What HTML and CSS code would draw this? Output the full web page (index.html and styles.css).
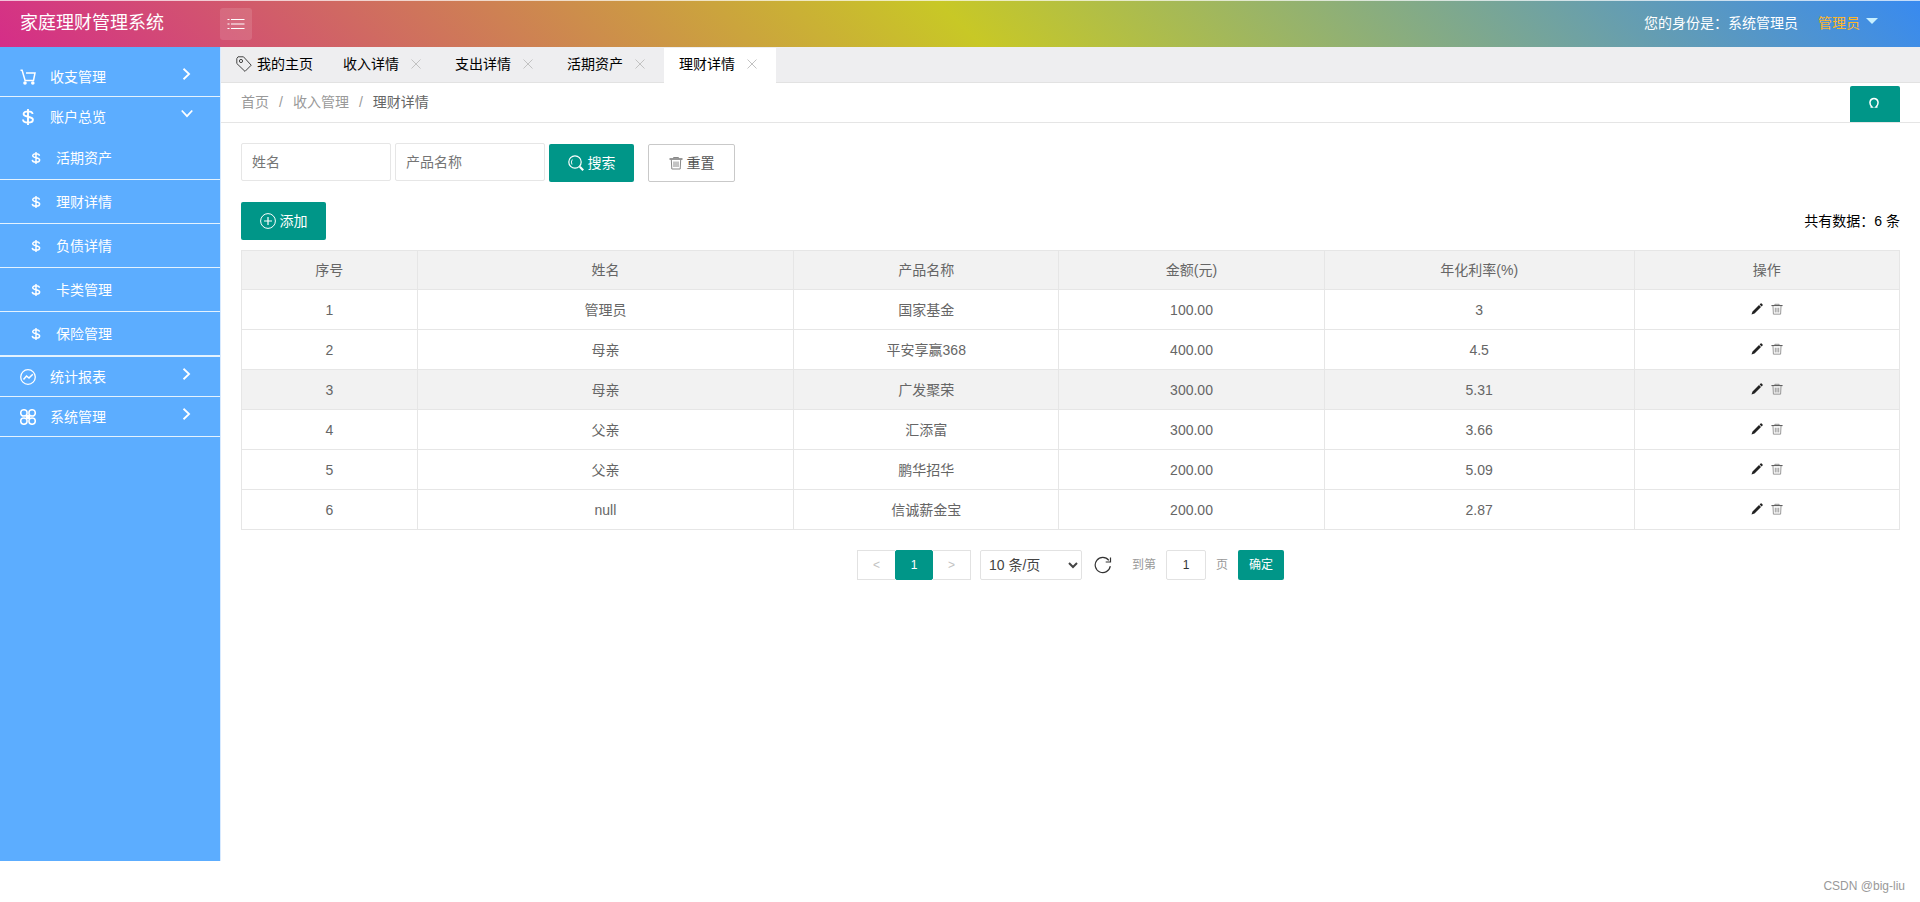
FILE: index.html
```html
<!DOCTYPE html>
<html lang="zh-CN">
<head>
<meta charset="utf-8">
<title>家庭理财管理系统</title>
<link rel="stylesheet" href="styles.css">
</head>
<body>
<svg class="sprite" aria-hidden="true">
  <symbol id="chevron" viewBox="0 0 12 12"><path d="M3 1.500l4.800 4.500L3 10.500" fill="none" stroke="currentColor" stroke-width="1.500"/></symbol>
  <symbol id="close" viewBox="0 0 10 10"><path d="M0.500 0.500l9 9M9.500 0.500l-9 9" stroke="currentColor" stroke-width="1" fill="none"/></symbol>
  <symbol id="dollar" viewBox="0 0 16 16"><path d="M12.600 5C12.400 3.100 10.700 2.400 8 2.400S3.600 3.300 3.600 5.100C3.600 8.600 12.900 6.900 12.900 10.700 12.900 12.700 11 13.600 8 13.600S3.100 12.700 3 10.500M8 0v16" fill="none" stroke="currentColor" stroke-width="1.900"/></symbol>
  <symbol id="trash" viewBox="0 0 14 14"><path d="M0.500 3h13" fill="none" stroke="#555" stroke-width="1.200"/><path d="M4.500 2.500V1.500h5v1M2.300 3.500l.5 9.500h8.400l.5-9.500" fill="none" stroke="currentColor"/><path d="M5 5.500v5.500M7 5.500v5.500M9 5.500v5.500" fill="none" stroke="currentColor"/></symbol>
  <symbol id="pencil" viewBox="0 0 12 12"><path d="M0.500 11.500l1-3L8 2l2 2-6.500 6.500zM8.600 1.400l1-1q.5-.4 1 0l1 1q.4.5 0 1l-1 1z" fill="currentColor"/></symbol>
</svg>

<header class="header">
  <h1 class="brand">家庭理财管理系统</h1>
  <button class="toggle" type="button" aria-label="菜单">
    <svg width="18" height="12" viewBox="0 0 18 12"><path d="M4 1.500h13.500M4 6h13.500M4 10.500h13.500M.5 1.500h2M.5 6h2M.5 10.500h2" stroke="currentColor" stroke-width="1.200"/></svg>
  </button>
  <div class="account">
    <span>您的身份是：系统管理员</span>
    <a class="user" href="#">管理员<i class="caret"></i></a>
  </div>
</header>

<div class="shell">
  <nav class="sidebar">
    <ul class="menu">
      <li><a class="menu-link" href="#">
        <svg class="menu-icon" viewBox="0 0 16 16"><path d="M.5 1.300h1.600l3 10.200h8.400L15 4H6" fill="none" stroke="currentColor" stroke-width="1.500"/><circle cx="5" cy="14" r="1.800" fill="currentColor"/><circle cx="12.800" cy="14" r="1.800" fill="currentColor"/></svg>
        <span>收支管理</span><svg class="arrow"><use href="#chevron"/></svg></a></li>
      <li><a class="menu-link" href="#">
        <svg class="menu-icon"><use href="#dollar"/></svg>
        <span>账户总览</span><svg class="arrow open"><use href="#chevron"/></svg></a>
        <ul class="submenu">
          <li><a href="#"><svg><use href="#dollar"/></svg>活期资产</a></li>
          <li><a href="#"><svg><use href="#dollar"/></svg>理财详情</a></li>
          <li><a href="#"><svg><use href="#dollar"/></svg>负债详情</a></li>
          <li><a href="#"><svg><use href="#dollar"/></svg>卡类管理</a></li>
          <li><a href="#"><svg><use href="#dollar"/></svg>保险管理</a></li>
        </ul>
      </li>
      <li><a class="menu-link" href="#">
        <svg class="menu-icon" viewBox="0 0 16 16"><circle cx="8" cy="8" r="7.300" fill="none" stroke="currentColor" stroke-width="1.300"/><path d="M3.500 10.500l3-3.500 2.500 2 3.800-3.800" fill="none" stroke="currentColor" stroke-width="1.500"/></svg>
        <span>统计报表</span><svg class="arrow"><use href="#chevron"/></svg></a></li>
      <li><a class="menu-link" href="#">
        <svg class="menu-icon" viewBox="0 0 16 16"><g fill="none" stroke="currentColor" stroke-width="1.500"><circle cx="3.900" cy="3.900" r="3.200"/><circle cx="12.100" cy="3.900" r="3.200"/><circle cx="3.900" cy="12.100" r="3.200"/><circle cx="12.100" cy="12.100" r="3.200"/></g><rect x="6" y="6" width="4" height="4" fill="currentColor"/></svg>
        <span>系统管理</span><svg class="arrow"><use href="#chevron"/></svg></a></li>
    </ul>
  </nav>

  <main class="main">
    <div class="tabs">
      <a class="tab home" href="#"><svg width="16" height="16" viewBox="0 0 16 16"><path d="M.8 2.500L2 .8 7.500.8 15.200 9.200 9 15.400.8 7.500z" fill="none" stroke="#444"/><circle cx="5" cy="5" r="1.600" fill="none" stroke="#444"/></svg>我的主页</a>
      <a class="tab" href="#">收入详情<svg class="close"><use href="#close"/></svg></a>
      <a class="tab" href="#">支出详情<svg class="close"><use href="#close"/></svg></a>
      <a class="tab" href="#">活期资产<svg class="close"><use href="#close"/></svg></a>
      <a class="tab active" href="#">理财详情<svg class="close"><use href="#close"/></svg></a>
    </div>

    <div class="crumb-bar">
      <div class="crumbs"><a href="#">首页</a><span>/</span><a href="#">收入管理</a><span>/</span><a class="current" href="#">理财详情</a></div>
      <button class="reload" type="button" aria-label="刷新"><svg width="10" height="12" viewBox="0 0 10 12"><path d="M1.500 10H3C-.3 7 .5 1.500 5 1.500S10.300 7 7 10h1.500" fill="none" stroke="currentColor" stroke-width="1.500"/></svg></button>
    </div>

    <div class="content">
      <form class="search">
        <input type="text" placeholder="姓名" aria-label="姓名">
        <input type="text" placeholder="产品名称" aria-label="产品名称">
        <button class="btn" type="button"><svg width="16" height="16" viewBox="0 0 16 16"><circle cx="7" cy="7" r="6.200" fill="none" stroke="currentColor" stroke-width="1.200"/><path d="M4 9.500Q2.500 7 4.300 4.500" fill="none" stroke="currentColor" stroke-width=".9"/><path d="M11.800 11.800l3.400 3.400" stroke="currentColor" stroke-width="2.200"/></svg>搜索</button>
        <button class="btn plain" type="reset"><svg width="14" height="14"><use href="#trash"/></svg>重置</button>
      </form>

      <div class="toolbar">
        <button class="btn" type="button"><svg width="16" height="16" viewBox="0 0 16 16"><circle cx="8" cy="8" r="7.400" fill="none" stroke="currentColor"/><path d="M8 4v8M4 8h8" stroke="currentColor" stroke-width="1.200"/></svg>添加</button>
        <span>共有数据：6 条</span>
      </div>

      <table class="grid">
        <colgroup><col class="c-no"><col class="c-name"><col class="c-mid"><col class="c-mid"><col class="c-rate"><col class="c-mid"></colgroup>
        <thead><tr><th>序号</th><th>姓名</th><th>产品名称</th><th>金额(元)</th><th>年化利率(%)</th><th>操作</th></tr></thead>
        <tbody>
          <tr><td>1</td><td>管理员</td><td>国家基金</td><td>100.00</td><td>3</td><td><a class="act edit" href="#" aria-label="编辑"><svg><use href="#pencil"/></svg></a><a class="act" href="#" aria-label="删除"><svg><use href="#trash"/></svg></a></td></tr>
          <tr><td>2</td><td>母亲</td><td>平安享赢368</td><td>400.00</td><td>4.5</td><td><a class="act edit" href="#" aria-label="编辑"><svg><use href="#pencil"/></svg></a><a class="act" href="#" aria-label="删除"><svg><use href="#trash"/></svg></a></td></tr>
          <tr class="hover"><td>3</td><td>母亲</td><td>广发聚荣</td><td>300.00</td><td>5.31</td><td><a class="act edit" href="#" aria-label="编辑"><svg><use href="#pencil"/></svg></a><a class="act" href="#" aria-label="删除"><svg><use href="#trash"/></svg></a></td></tr>
          <tr><td>4</td><td>父亲</td><td>汇添富</td><td>300.00</td><td>3.66</td><td><a class="act edit" href="#" aria-label="编辑"><svg><use href="#pencil"/></svg></a><a class="act" href="#" aria-label="删除"><svg><use href="#trash"/></svg></a></td></tr>
          <tr><td>5</td><td>父亲</td><td>鹏华招华</td><td>200.00</td><td>5.09</td><td><a class="act edit" href="#" aria-label="编辑"><svg><use href="#pencil"/></svg></a><a class="act" href="#" aria-label="删除"><svg><use href="#trash"/></svg></a></td></tr>
          <tr><td>6</td><td>null</td><td>信诚薪金宝</td><td>200.00</td><td>2.87</td><td><a class="act edit" href="#" aria-label="编辑"><svg><use href="#pencil"/></svg></a><a class="act" href="#" aria-label="删除"><svg><use href="#trash"/></svg></a></td></tr>
        </tbody>
      </table>

      <div class="pager">
        <div class="pages"><button type="button" disabled>&lt;</button><button class="on" type="button">1</button><button type="button" disabled>&gt;</button></div>
        <select aria-label="每页条数"><option>10 条/页</option><option>20 条/页</option></select>
        <button class="refresh" type="button" aria-label="刷新列表"><svg width="18" height="18" viewBox="0 0 18 18"><path d="M16.300 10.200A7.600 7.600 0 1 1 14.800 4.300" fill="none" stroke="currentColor" stroke-width="1.200"/><path d="M16.500 1.500V6h-4.800" fill="none" stroke="currentColor" stroke-width="1.200"/></svg></button>
        <label class="skip">到第<input type="text" value="1">页</label>
        <button class="go" type="button">确定</button>
      </div>
    </div>
  </main>
</div>

<footer class="footer">CSDN @big-liu</footer>
</body>
</html>
```
FILE: styles.css
```css
* {
  box-sizing: border-box;
}

body {
  margin: 0;
  min-height: 100vh;
  display: flex;
  flex-direction: column;
  background: #fff;
  color: #000;
  font: 14px/20px "Liberation Sans", "Noto Sans CJK SC", sans-serif;
}

a {
  color: inherit;
  text-decoration: none;
}

ul {
  margin: 0;
  padding: 0;
  list-style: none;
}

button,
input,
select {
  font: inherit;
  color: inherit;
}

button {
  padding: 0;
  border: 0;
  background: none;
  cursor: pointer;
}

svg {
  flex: none;
}

.sprite {
  display: none;
}

/* Header */
.header {
  display: flex;
  align-items: center;
  height: 47px;
  padding-right: 42px;
  border-top: 1px solid rgba(255, 255, 255, .7);
  background: linear-gradient(45deg, #d52d88, #c8c826 50%, #388af0) border-box;
  color: #fff;
}

.brand {
  width: 220px;
  margin: 0;
  padding: 0 20px 2px;
  font-size: 18px;
  font-weight: 400;
  line-height: 24px;
}

.toggle {
  display: flex;
  align-items: center;
  justify-content: center;
  width: 32px;
  height: 32px;
  border-radius: 3px;
  background: rgba(255, 255, 255, .12);
}

.account {
  display: flex;
  gap: 20px;
  margin-left: auto;
  padding-bottom: 2px;
}

.user {
  display: flex;
  align-items: center;
  gap: 6px;
  color: #ffb629;
}

.caret {
  margin-bottom: 4px;
  border: 6px solid transparent;
  border-top-color: #c8f0ff;
  border-bottom: 0;
}

/* Sidebar */
.shell {
  display: flex;
  flex: 1;
}

.sidebar {
  width: 221px;
  flex: none;
  padding-top: 10px;
  border-right: 1px solid #d8eaff;
  background: #5cadff;
  color: #fff;
}

.menu li {
  border-bottom: 1px solid #e4f3ff;
}

.menu-link {
  display: flex;
  align-items: center;
  height: 39px;
  padding: 0 26px 0 20px;
}

.menu-icon {
  width: 16px;
  height: 16px;
  margin-right: 14px;
}

.arrow {
  width: 14px;
  height: 14px;
  margin: 0 0 6px auto;
}

.arrow.open {
  transform: rotate(90deg);
}

.submenu a {
  display: flex;
  align-items: center;
  gap: 14px;
  height: 43px;
  padding-left: 30px;
}

.submenu svg {
  width: 12px;
  height: 12px;
}

/* Tabs and breadcrumb */
.main {
  flex: 1;
  min-width: 0;
}

.tabs {
  display: flex;
  align-items: flex-end;
  height: 36px;
  border-bottom: 1px solid #e2e2e2;
  background: #eeeef0;
}

.tab {
  display: flex;
  align-items: center;
  height: 34px;
  padding: 0 19px 2px 15px;
}

.tab.home {
  gap: 5px;
  padding-right: 15px;
}

.tab.active {
  height: 35px;
  margin-bottom: -1px;
  padding-bottom: 3px;
  background: #fff;
}

.close {
  width: 10px;
  height: 10px;
  margin-left: 12px;
  color: #c2c2c2;
}

.crumb-bar {
  display: flex;
  align-items: flex-end;
  justify-content: space-between;
  height: 40px;
  padding: 0 20px;
  border-bottom: 1px solid #e5e5e5;
}

.crumbs {
  align-self: center;
  padding-bottom: 2px;
  color: #999;
}

.crumbs span {
  margin: 0 10px;
}

.crumbs .current {
  color: #666;
}

.reload {
  display: flex;
  align-items: center;
  justify-content: center;
  width: 50px;
  height: 36px;
  padding: 0 3px 2px 0;
  border-radius: 2px 2px 0 0;
  background: #009688;
  color: #fff;
}

/* Content */
.content {
  padding: 20px;
}

.search {
  display: flex;
  align-items: flex-end;
  gap: 4px;
  height: 39px;
}

.search input {
  align-self: flex-start;
  width: 150px;
  height: 38px;
  padding: 0 10px;
  border: 1px solid #e6e6e6;
  border-radius: 2px;
}

.search input::placeholder {
  color: #757575;
}

.btn {
  display: flex;
  align-items: center;
  justify-content: center;
  gap: 4px;
  width: 85px;
  height: 38px;
  border-radius: 2px;
  background: #009688;
  color: #fff;
}

.btn.plain {
  width: 87px;
  margin-left: 10px;
  border: 1px solid #c9c9c9;
  background: #fff;
  color: #555;
}

.plain svg {
  color: #888;
}

.toolbar {
  display: flex;
  align-items: center;
  justify-content: space-between;
  margin: 20px 0 10px;
}

.grid {
  width: 100%;
  border-collapse: collapse;
  table-layout: fixed;
  color: #666;
  text-align: center;
}

.c-no {
  width: 10.6%;
}

.c-name {
  width: 22.7%;
}

.c-mid {
  width: 16%;
}

.c-rate {
  width: 18.7%;
}

.grid th,
.grid td {
  height: 40px;
  padding: 0;
  border: 1px solid #e6e6e6;
  font-weight: 400;
}

.grid th {
  height: 39px;
}

.grid th,
.grid .hover {
  background: #f2f2f2;
}

.act {
  display: inline-block;
  margin: 0 4px;
  color: #888;
}

.act svg {
  display: block;
  width: 12px;
  height: 12px;
}

.act.edit {
  color: #222;
}

/* Pagination */
.pager {
  display: flex;
  align-items: center;
  justify-content: center;
  margin-top: 20px;
  color: #333;
}

.pages {
  display: flex;
  font-size: 12px;
}

.pages button {
  width: 38px;
  height: 30px;
  border: 1px solid #e2e2e2;
  color: #c2c2c2;
}

.pages .on {
  border-color: #009688;
  border-radius: 2px;
  background: #009688;
  color: #fff;
}

.pages button:first-child {
  border-right: 0;
}

.pages button:last-child {
  border-left: 0;
}

.pager select {
  width: 102px;
  height: 30px;
  margin: 0 12px 0 9px;
  padding: 0 4px;
  border: 1px solid #e2e2e2;
  border-radius: 2px;
  background: #fff;
  color: #444;
}

.refresh {
  display: flex;
}

.skip {
  display: flex;
  align-items: center;
  gap: 10px;
  margin: 0 10px 0 20px;
  color: #999;
  font-size: 12px;
}

.skip input {
  width: 40px;
  height: 30px;
  padding: 0;
  border: 1px solid #e2e2e2;
  border-radius: 2px;
  color: #333;
  text-align: center;
}

.go {
  width: 46px;
  height: 30px;
  border-radius: 2px;
  background: #009688;
  color: #fff;
  font-size: 12px;
}

.footer {
  height: 41px;
  padding: 15px 15px 0 0;
  color: #999;
  font-size: 12px;
  text-align: right;
}
```
